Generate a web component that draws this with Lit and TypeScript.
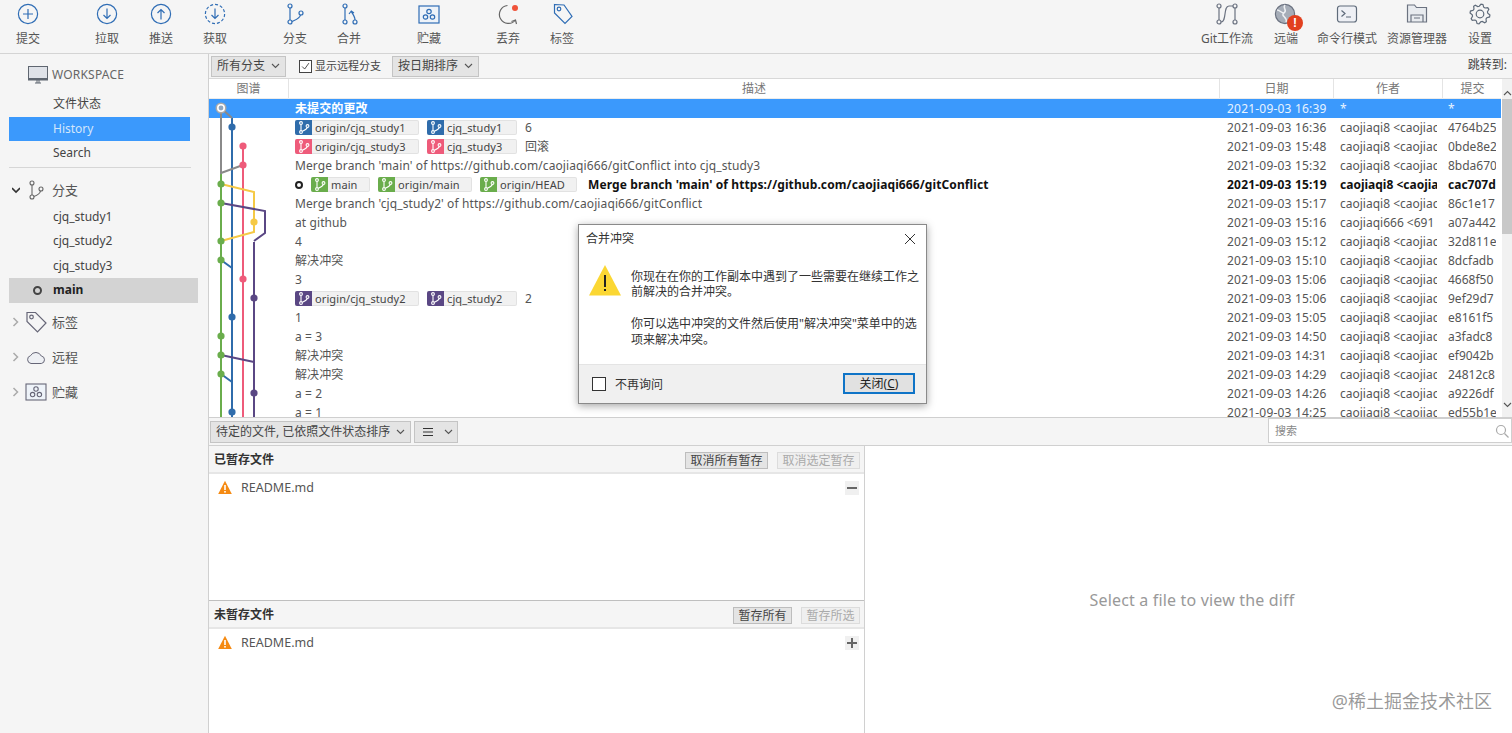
import { LitElement, html, css, svg } from 'lit';
import { customElement } from 'lit/decorators.js';

interface Ref { name: string; color: string; w: number; }
interface Commit {
    refs?: Ref[];
    text: string;
    date: string;
    author: string;
    hash: string;
    head?: boolean;
    selected?: boolean;
}

const BLUE = '#2f6cab';
const PINK = '#ee5b7a';
const GREEN = '#6aad4c';
const PURPLE = '#5a4784';
const YELLOW = '#f5c945';
const AUTHOR = 'caojiaqi8 <caojiaq';

const commits: Commit[] = [
    { text: '未提交的更改', date: '2021-09-03 16:39', author: '*', hash: '*', selected: true },
    { refs: [{ name: 'origin/cjq_study1', color: BLUE, w: 124 }, { name: 'cjq_study1', color: BLUE, w: 90 }], text: '6', date: '2021-09-03 16:36', author: AUTHOR, hash: '4764b25' },
    { refs: [{ name: 'origin/cjq_study3', color: PINK, w: 124 }, { name: 'cjq_study3', color: PINK, w: 90 }], text: '回滚', date: '2021-09-03 15:48', author: AUTHOR, hash: '0bde8e2' },
    { text: "Merge branch 'main' of https://github.com/caojiaqi666/gitConflict into cjq_study3", date: '2021-09-03 15:32', author: AUTHOR, hash: '8bda670' },
    { head: true, refs: [{ name: 'main', color: GREEN, w: 59 }, { name: 'origin/main', color: GREEN, w: 94 }, { name: 'origin/HEAD', color: GREEN, w: 97 }], text: "Merge branch 'main' of https://github.com/caojiaqi666/gitConflict", date: '2021-09-03 15:19', author: 'caojiaqi8 <caojia', hash: 'cac707d' },
    { text: "Merge branch 'cjq_study2' of https://github.com/caojiaqi666/gitConflict", date: '2021-09-03 15:17', author: AUTHOR, hash: '86c1e17' },
    { text: 'at github', date: '2021-09-03 15:16', author: 'caojiaqi666 <691', hash: 'a07a442' },
    { text: '4', date: '2021-09-03 15:12', author: AUTHOR, hash: '32d811e' },
    { text: '解决冲突', date: '2021-09-03 15:10', author: AUTHOR, hash: '8dcfadb' },
    { text: '3', date: '2021-09-03 15:06', author: AUTHOR, hash: '4668f50' },
    { refs: [{ name: 'origin/cjq_study2', color: PURPLE, w: 124 }, { name: 'cjq_study2', color: PURPLE, w: 90 }], text: '2', date: '2021-09-03 15:06', author: AUTHOR, hash: '9ef29d7' },
    { text: '1', date: '2021-09-03 15:05', author: AUTHOR, hash: 'e8161f5' },
    { text: 'a = 3', date: '2021-09-03 14:50', author: AUTHOR, hash: 'a3fadc8' },
    { text: '解决冲突', date: '2021-09-03 14:31', author: AUTHOR, hash: 'ef9042b' },
    { text: '解决冲突', date: '2021-09-03 14:29', author: AUTHOR, hash: '24812c8' },
    { text: 'a  = 2', date: '2021-09-03 14:26', author: AUTHOR, hash: 'a9226df' },
    { text: 'a = 1', date: '2021-09-03 14:25', author: AUTHOR, hash: 'ed55b1e' },
];

const branchGlyph = (color: string) => svg`
  <svg width="12" height="13" viewBox="0 0 12 13" fill="none" stroke=${color} stroke-width="1.1">
    <circle cx="3" cy="2" r="1.4"/><circle cx="3" cy="11" r="1.4"/><circle cx="9.5" cy="5" r="1.4"/>
    <path d="M3 3.4v6.2M9.3 6.4C9 8.5 6 9.5 4.2 10.3"/>
  </svg>`;

const gearPath = () => {
    const pts: string[] = [];
    for (let i = 0; i < 32; i++) {
        const a = (i / 32) * Math.PI * 2 + 0.1;
        const r = i % 4 < 2 ? 10 : 7.8;
        pts.push(`${(12 + r * Math.cos(a)).toFixed(2)} ${(12 + r * Math.sin(a)).toFixed(2)}`);
    }
    return 'M' + pts.join('L') + 'Z';
};

const stashIcon = (color: string, w = 22, h = 18) => svg`
  <svg width=${w} height=${h} viewBox="0 0 22 18" fill="none" stroke=${color} stroke-width="1.1">
    <rect x="1" y="1" width="20" height="16" fill="#eef3f9"/>
    <circle cx="11" cy="6" r="2.2"/><circle cx="7.6" cy="11.6" r="2.2"/><circle cx="14.4" cy="11.6" r="2.2"/>
  </svg>`;

const tagIcon = (color: string) => svg`
  <svg width="24" height="24" viewBox="0 0 24 24" fill="none" stroke=${color} stroke-width="1.2">
    <path d="M3 2.5h8.5L22 13l-8.5 9L3 11.5z"/><circle cx="7.5" cy="7" r="1.8"/>
  </svg>`;

const warnIcon = svg`
  <svg width="14" height="15" viewBox="0 0 14 15">
    <path d="M7 .8L13.8 14H.2z" fill="#f58a12"/>
    <rect x="6.2" y="5" width="1.6" height="5" fill="#fff"/><rect x="6.2" y="11" width="1.6" height="1.6" fill="#fff"/>
  </svg>`;

const chevron = svg`<svg width="9" height="6" viewBox="0 0 9 6" fill="none" stroke="#555" stroke-width="1.1"><path d="M1 1l3.5 3.5L8 1"/></svg>`;

const leftTools = [
    [['提交', svg`<circle cx="14" cy="14" r="9.6"/><path d="M14 9v10M9 14h10"/>`]],
    [
        ['拉取', svg`<circle cx="14" cy="14" r="9.6"/><path d="M14 8.5v10M10.5 15l3.5 3.5 3.5-3.5"/>`],
        ['推送', svg`<circle cx="14" cy="14" r="9.6"/><path d="M14 19.5v-10M10.5 13l3.5-3.5 3.5 3.5"/>`],
        ['获取', svg`<circle cx="14" cy="14" r="9.6" stroke-dasharray="3 2"/><path d="M14 8.5v10M10.5 15l3.5 3.5 3.5-3.5"/>`],
    ],
    [
        ['分支', svg`<circle cx="9" cy="6" r="2"/><circle cx="9" cy="22" r="2"/><circle cx="20" cy="13" r="2"/><path d="M9 8v12M19.500 15c-.5 3.500-5.500 5-8.600 6.500"/>`],
        ['合并', svg`<circle cx="10" cy="6" r="2"/><circle cx="10" cy="22" r="2"/><circle cx="20" cy="22" r="2"/><path d="M10 8v12M20 20c0-3-1.500-5-3.500-8M14 14l2.300-3 2.700 2"/>`],
    ],
    [['贮藏', svg`<rect x="4" y="6" width="20" height="17" fill="#eef3f9"/><circle cx="14" cy="11.5" r="2.2"/><circle cx="10.5" cy="17" r="2.2"/><circle cx="17.5" cy="17" r="2.2"/>`]],
    [
        ['丢弃', svg`<path d="M13.500 5.500A9 9 0 1 0 21.500 20" stroke="#666"/><path d="M17.500 21.500l4-1.500 1 4" stroke="#666"/><circle cx="21" cy="8" r="3" fill="#f0533a" stroke="none"/>`],
        ['标签', svg`<path d="M6.500 4.500l9.500.5 8 11.500-7 7-10.500-10.500z"/><circle cx="11" cy="9" r="1.800"/>`],
    ],
] as const;

const rightTools = [
    ['Git工作流', svg`<g stroke="#6b7280"><circle cx="6" cy="6" r="2"/><circle cx="6" cy="22" r="2"/><circle cx="22" cy="6" r="2"/><circle cx="22" cy="22" r="2"/><path d="M6 8v12M22 8v12M8 22c6 0 2-16 8-16h4"/></g>`],
    ['远端', svg`<circle cx="13" cy="14" r="9.6" fill="#a6adb8" stroke="#6b7280"/><path d="M13 5c-3 3 3 5-1 8s4 4 2 9M5 10c3 0 4 3 7 3" stroke="#eef0f3" stroke-width="1.5"/>`],
    ['命令行模式', svg`<rect x="4.500" y="6" width="19" height="16" rx="2.500" fill="#eef0f5" stroke="#5f6b7a"/><path d="M8.500 10.500l3.500 3-3.500 3M13 17h5" stroke="#5f6b7a"/>`],
    ['资源管理器', svg`<path d="M4.500 5h7l2 2.500h10V22h-19z" fill="#e8ebef" stroke="#6b7280"/><path d="M8 22v-7h12v7M11 18h6" stroke="#6b7280"/>`],
    ['设置', svg`<path d=${gearPath()} transform="translate(2 2)" stroke="#5f6b7a"/><circle cx="14" cy="14" r="3.800" stroke="#5f6b7a"/>`],
] as const;

const sideBranches = ['cjq_study1', 'cjq_study2', 'cjq_study3'];

@customElement('app-root')
export class AppRoot extends LitElement {
    static styles = css`
    :host { display: block; width: 1512px; height: 733px; position: relative; overflow: hidden; background: #fff; color: #555;
      font: 12px/16px 'Noto Sans', 'Noto Sans CJK SC', sans-serif; }
    * { box-sizing: border-box; }

    .toolbar { height: 54px; background: #f5f5f5; border-bottom: 1px solid #d4d4d4; display: flex; justify-content: space-between; }
    .tool-left { display: flex; gap: 25px; padding-left: 1px; }
    .tool-group { display: flex; }
    .tool-group:nth-child(3), .tool-group:nth-child(4) { margin-left: 1px; }
    .tool { width: 54px; display: flex; flex-direction: column; align-items: center; white-space: nowrap; }
    .tool svg { display: block; fill: none; stroke: #2f6db5; stroke-width: 1.2; }
    .tool span { margin-top: 3px; line-height: 16px; color: #555; }
    .tool-right { display: grid; grid-template-columns: 58px 60px 62px 78px 48px; margin-right: 8px; }
    .tool-right .tool { width: auto; position: relative; }
    .badge { position: absolute; left: 31px; top: 15px; width: 16px; height: 16px; border-radius: 50%; background: #e2401f; color: #fff !important;
      margin: 0 !important; font: bold 12px/16px 'Liberation Sans', sans-serif; text-align: center; }

    .body { display: flex; height: 679px; }
    .side { width: 209px; flex: none; background: #f5f5f5; border-right: 1px solid #d0d0d0; color: #444; }
    .ws { height: 38px; display: flex; align-items: center; padding: 3px 0 0 28px; gap: 4px; color: #666; letter-spacing: .2px; }
    .item { height: 24.5px; line-height: 24px; margin-left: 9px; width: 181px; padding-left: 44px; }
    .item.on { background: #3b99fc; color: #d3e6fb; }
    .sep { height: 1px; background: #d6d6d6; width: 182px; margin: 1px 0 0 9px; }
    .sec { display: flex; align-items: center; height: 35px; padding-left: 12px; gap: 4px; color: #555; font-size: 13px; }
    .sec .ic { width: 24px; display: flex; justify-content: center; }
    .sec svg.arrow { width: 8px; height: 10px; flex: none; }
    .sec.first { margin-top: 7px; height: 30px; }
    .item.main { width: 189px; margin-bottom: 2px; background: #d3d3d3; color: #222; font-weight: 700; position: relative; }
    .ring { position: absolute; left: 24px; top: 8px; width: 9px; height: 9px; border-radius: 50%; border: 2px solid #444; }

    .main-col { flex: 1; min-width: 0; display: flex; flex-direction: column; }
    .filter { height: 25px; background: #f5f5f5; border-bottom: 1px solid #d8d8d8; display: flex; align-items: center; padding-left: 2px; position: relative; }
    .combo { height: 21px; background: #e4e4e4; border: 1px solid #c4c4c4; display: inline-flex; align-items: center; gap: 6px; padding: 0 5px; color: #444; white-space: nowrap; }
    .check { display: inline-flex; align-items: center; gap: 3px; margin: 0 11px 0 13px; color: #444; font-size: 11px; }
    .box { width: 13px; height: 13px; border: 1px solid #444; background: #fff; display: inline-block; }
    .jump { position: absolute; right: 5px; top: 3px; color: #444; }

    .table { height: 339px; position: relative; overflow: hidden; background: #fff; border-bottom: 1px solid #cfcfcf; }
    .row, .head { display: grid; width: 1292px; }
    .row { grid-template-columns: 79px 931px 114px 108px 60px; }
    .head { grid-template-columns: 80px 931px 114px 109px 60px; }
    .head { height: 20px; line-height: 19px; text-align: center; color: #777; border-bottom: 1px solid #ececec; }
    .head div { border-right: 1px solid #e4e4e4; }
    .row { height: 19px; line-height: 19px; color: #555; white-space: nowrap; }
    .row.sel { background: #3b99fc; color: #e8f3ff; }
    .row.sel .text { color: #fff; font-weight: 700; }
    .row.bold { color: #111; font-weight: 700; }
    .row.bold .text { margin-left: 3px; }
    .cell { overflow: hidden; padding-left: 7px; }
    .date { padding-left: 8px; margin-right: 4px; letter-spacing: .2px; }
    .auth { padding-left: 7px; margin-right: 4px; }
    .hash { padding-left: 7px; margin-right: 5px; }
    .desc { display: flex; align-items: center; gap: 8px; padding-left: 7px; letter-spacing: .1px; }
    .hd-ring { width: 8px; height: 8px; border: 2px solid #222; border-radius: 50%; margin-left: 0; }
    .ref { height: 15px; display: flex; align-items: stretch; background: #f1f1f1; border: 1px solid #e2e2e2; border-left: 0; border-radius: 2px; font-size: 11px; line-height: 13px; color: #444; font-weight: 400; }
    .ref i { width: 17px; border-radius: 2px 0 0 2px; display: flex; align-items: center; justify-content: center; margin: -1px 3px -1px 0; }
    .graph { position: absolute; left: 0; top: 20px; pointer-events: none; }
    .scroll { position: absolute; right: 0; top: 0; bottom: 0; width: 10px; background: #f1f1f1; }
    .thumb { height: 135px; margin-top: 20px; background: #c8c8c8; }
    .s-up, .s-down { position: absolute; left: 1px; color: #666; }
    .s-up { top: 7px; transform: rotate(180deg); }
    .s-down { bottom: 5px; }

    .bar { height: 28px; background: #f5f5f5; border-bottom: 1px solid #d0d0d0; display: flex; align-items: center; padding-left: 1px; gap: 3px; position: relative; }
    .bar .combo { height: 22px; }
    .bar .combo.mode { padding: 0 4px 0 8px; gap: 11px; }
    .search { position: absolute; left: 1059px; top: 0; right: 0; height: 25px; background: #fff; border: 1px solid #cfcfcf; padding-left: 6px; line-height: 23px; color: #888; font-size: 11px; }
    .search svg { position: absolute; right: 1px; top: 4px; }

    .split { flex: 1; display: flex; min-height: 0; }
    .files { width: 656px; border-right: 1px solid #d0d0d0; display: flex; flex-direction: column; }
    .pane-h { height: 28px; background: #f5f5f5; border-bottom: 2px solid #e6e6e6; display: flex; align-items: center; gap: 9px; padding: 2px 4px 0 5px; color: #333; font-weight: 500; }
    .pane-h b { font-weight: 700; flex: 1; color: #333; }
    .btn { height: 17px; padding: 0 4.5px; line-height: 15px; background: #e4e4e4; border: 1px solid #bdbdbd; color: #444; font-weight: 400; white-space: nowrap; }
    .btn.off { background: #efefef; border-color: #dcdcdc; color: #aaa; }
    .list { background: #fff; }
    .list.a { height: 127px; border-bottom: 1px solid #bfbfbf; }
    .list.b { flex: 1; }
    .file { height: 27px; display: flex; align-items: center; padding: 0 5px 0 9px; gap: 9px; color: #555; font-size: 12.5px; }
    .file span { flex: 1; }
    .pm { width: 14px; height: 14px; background: #f0f0f0; position: relative; }
    .pm::before { content: ''; position: absolute; left: 2px; right: 2px; top: 6px; height: 2px; background: #666; }
    .pm.plus::after { content: ''; position: absolute; top: 2px; bottom: 2px; left: 6px; width: 2px; background: #666; }
    .diff { flex: 1; background: #fff; display: flex; align-items: center; justify-content: center; color: #999; font-size: 16px; letter-spacing: .17px; padding: 21px 0 0 7px; }

    .dialog { position: absolute; left: 578px; top: 224px; width: 349px; height: 180px; background: #fff; border: 1px solid #8a8a8a; box-shadow: 0 2px 8px rgba(0,0,0,.35); display: flex; flex-direction: column; color: #333; }
    .d-title { height: 29px; display: flex; align-items: center; justify-content: space-between; padding: 1px 10px 0 7px; }
    .d-body { flex: 1; display: flex; padding: 11px 10px 0 10px; gap: 10px; }
    .d-text { line-height: 15.8px; padding-top: 5px; width: 292px; flex: none; }
    .d-text p { margin: 0 0 16px; }
    .d-foot { height: 41px; background: #f0f0f0; border-top: 1px solid #e4e4e4; display: flex; align-items: center; padding: 0 11px 0 13px; gap: 9px; }
    .d-foot .box { width: 14px; height: 14px; border-color: #333; margin-top: 1px; }
    .d-foot span.t { flex: 1; padding-top: 3px; }
    .d-btn { width: 72px; height: 21px; background: #e1e1e1; border: 2px solid #0f74c7; text-align: center; line-height: 17px; color: #222; }
    .d-btn u { text-decoration: underline; }

    .wm { position: absolute; right: 20px; top: 689px; font-size: 18px; line-height: 24px; color: rgba(120,120,120,.75); }
  `;

    private graph() {
        const line = (d: string, c: string, w = 2) => svg`<path d=${d} stroke=${c} stroke-width=${w} fill="none"/>`;
        const dot = (x: number, y: number, c: string) => svg`<circle cx=${x} cy=${y} r="3.600" fill=${c}/>`;
        // x is page x - 209, y is page y - 99
        const y = (v: number) => v - 99;
        const lanes = { g: 12, b: 23, p: 34, y: 45, r: 56 };
        return svg`<svg class="graph" width="79" height="320" viewBox="0 0 79 320">
      ${line(`M${lanes.g} ${y(173)}V320`, GREEN)}
      ${line(`M${lanes.b} ${y(118)}V320`, BLUE)}
      ${line(`M${lanes.p} ${y(146)}V320`, PINK)}
      ${line(`M${lanes.g} ${y(184)}L${lanes.y} ${y(192)}V${y(232)}L${lanes.g} ${y(241)}`, YELLOW)}
      ${line(`M${lanes.y} ${y(242)}V320`, PURPLE)}
      ${line(`M${lanes.g} ${y(203)}L${lanes.r} ${y(211)}V${y(233)}L${lanes.y} ${y(241)}`, PURPLE)}
      ${line(`M${lanes.g} ${y(355)}L${lanes.y} ${y(362)}`, PURPLE)}
      ${line(`M${lanes.g} ${y(260)}L${lanes.b} ${y(268)}`, BLUE)}
      ${line(`M${lanes.g} ${y(374)}L${lanes.b} ${y(382)}`, BLUE)}
      ${line(`M${lanes.g} ${y(108)}V${y(173)}L${lanes.p} ${y(165)}`, '#8a8a8a')}
      ${line(`M${lanes.g} ${y(108)}L${lanes.b} ${y(118)}`, '#8a8a8a')}
      <circle cx=${lanes.g} cy=${y(108)} r="5.500" fill="#a9a9a9"/>
      <circle cx=${lanes.g} cy=${y(108)} r="4" fill="#fff"/>
      <circle cx=${lanes.g} cy=${y(108)} r="2.400" fill="#8fa6bf"/>
      ${dot(lanes.b, y(127), BLUE)} ${dot(lanes.p, y(146), PINK)} ${dot(lanes.p, y(165), PINK)}
      ${dot(lanes.g, y(184), GREEN)} ${dot(lanes.g, y(203), GREEN)} ${dot(lanes.y, y(222), YELLOW)}
      ${dot(lanes.g, y(241), GREEN)} ${dot(lanes.g, y(260), GREEN)} ${dot(lanes.p, y(279), PINK)}
      ${dot(lanes.y, y(298), PURPLE)} ${dot(lanes.b, y(317), BLUE)} ${dot(lanes.g, y(336), GREEN)}
      ${dot(lanes.g, y(355), GREEN)} ${dot(lanes.g, y(374), GREEN)} ${dot(lanes.y, y(393), PURPLE)}
      ${dot(lanes.b, y(412), BLUE)}
    </svg>`;
    }

    private renderRow(c: Commit) {
        return html`<div class="row ${c.selected ? 'sel' : ''} ${c.head ? 'bold' : ''}">
      <div></div>
      <div class="desc">
        ${c.head ? html`<span class="hd-ring"></span>` : ''}
        ${(c.refs || []).map(r => html`<span class="ref" style="width:${r.w}px"><i style="background:${r.color}">${branchGlyph('#fff')}</i>${r.name}</span>`)}
        <span class="text">${c.text}</span>
      </div>
      <div class="cell date">${c.date}</div>
      <div class="cell auth">${c.author}</div>
      <div class="cell hash">${c.hash}</div>
    </div>`;
    }

    render() {
        const arrow = svg`<svg class="arrow" viewBox="0 0 8 10" fill="none" stroke="#aaa" stroke-width="1.500"><path d="M1.500 1l4 4-4 4"/></svg>`;
        return html`
    <div class="toolbar">
      <div class="tool-left">
        ${leftTools.map(g => html`<div class="tool-group">${g.map(t => html`<div class="tool"><svg width="28" height="28" viewBox="0 0 28 28">${t[1]}</svg><span>${t[0]}</span></div>`)}</div>`)}
      </div>
      <div class="tool-right">
        ${rightTools.map(t => html`<div class="tool"><svg width="28" height="28" viewBox="0 0 28 28">${t[1]}</svg>
          ${t[0] === '远端' ? html`<span class="badge">!</span>` : ''}<span>${t[0]}</span></div>`)}
      </div>
    </div>
    <div class="body">
      <div class="side">
        <div class="ws">
          <svg width="20" height="18" viewBox="0 0 20 18"><rect x=".5" y=".5" width="19" height="13.500" fill="#dfe2e8" stroke="#5f6670"/><rect x=".5" y="12" width="19" height="2" fill="#5f6670"/><path d="M7 17h6M9 14v3M11 14v3" stroke="#5f6670"/></svg>
          <span>WORKSPACE</span>
        </div>
        <div class="item">文件状态</div>
        <div class="item on">History</div>
        <div class="item">Search</div>
        <div class="sep"></div>
        <div class="sec first">
          <svg class="arrow" viewBox="0 0 8 10" fill="none" stroke="#333" stroke-width="1.600"><path d="M0 3l4 4 4-4"/></svg>
          <span class="ic"><svg width="18" height="20" viewBox="0 0 18 20" fill="none" stroke="#666" stroke-width="1.100"><circle cx="5" cy="3" r="2"/><circle cx="5" cy="17" r="2"/><circle cx="14" cy="9" r="2"/><path d="M5 5v10M13.500 11c-.5 3-4 4.500-6.700 5.500"/></svg></span>分支
        </div>
        ${sideBranches.map(b => html`<div class="item">${b}</div>`)}
        <div class="item main"><span class="ring"></span>main</div>
        <div class="sec">${arrow}<span class="ic">${tagIcon('#667')}</span>标签</div>
        <div class="sec">${arrow}<span class="ic"><svg width="20" height="13" viewBox="0 0 20 13" fill="#eef0f4" stroke="#667"><path d="M5 12.500a4 4 0 0 1-.5-7.800A6 6 0 0 1 15.300 5a3.800 3.800 0 0 1 0 7.500z"/></svg></span>远程</div>
        <div class="sec">${arrow}<span class="ic">${stashIcon('#667')}</span>贮藏</div>
      </div>
      <div class="main-col">
        <div class="filter">
          <span class="combo">所有分支 ${chevron}</span>
          <span class="check"><svg class="box" viewBox="0 0 13 13" fill="none" stroke="#333"><path d="M2.500 6.500l3 3 5-7"/></svg>显示远程分支</span>
          <span class="combo">按日期排序 ${chevron}</span>
          <span class="jump">跳转到:</span>
        </div>
        <div class="table">
          <div class="head"><div>图谱</div><div>描述</div><div>日期</div><div>作者</div><div>提交</div></div>
          ${commits.map(c => this.renderRow(c))}
          ${this.graph()}
          <div class="scroll">
            <div class="thumb"></div>
            <span class="s-up">${chevron}</span>
            <span class="s-down">${chevron}</span>
          </div>
        </div>
        <div class="bar">
          <span class="combo">待定的文件, 已依照文件状态排序 ${chevron}</span>
          <span class="combo mode"><svg width="10" height="10" viewBox="0 0 10 10" stroke="#333"><path d="M0 1.500h10M0 5h10M0 8.500h10"/></svg>${chevron}</span>
          <div class="search">搜索<svg width="16" height="16" viewBox="0 0 16 16" fill="none" stroke="#aaa" stroke-width="1.200"><circle cx="7" cy="7" r="4.500"/><path d="M10.500 10.500l4 4"/></svg></div>
        </div>
        <div class="split">
          <div class="files">
            <div class="pane-h"><b>已暂存文件</b><span class="btn">取消所有暂存</span><span class="btn off">取消选定暂存</span></div>
            <div class="list a"><div class="file">${warnIcon}<span>README.md</span><i class="pm"></i></div></div>
            <div class="pane-h"><b>未暂存文件</b><span class="btn">暂存所有</span><span class="btn off">暂存所选</span></div>
            <div class="list b"><div class="file">${warnIcon}<span>README.md</span><i class="pm plus"></i></div></div>
          </div>
          <div class="diff">Select a file to view the diff</div>
        </div>
      </div>
    </div>
    <div class="dialog">
      <div class="d-title"><span>合并冲突</span>
        <svg width="12" height="12" viewBox="0 0 12 12" stroke="#333" fill="none"><path d="M1 1l10 10M11 1L1 11"/></svg></div>
      <div class="d-body">
        <svg width="32" height="32" viewBox="0 0 32 32" style="flex:none"><path d="M16 1L32 31.500H0z" fill="#fbd733"/><rect x="15" y="11" width="2" height="12" fill="#222"/><rect x="15" y="25" width="2" height="2" fill="#222"/></svg>
        <div class="d-text">
          <p>你现在在你的工作副本中遇到了一些需要在继续工作之前解决的合并冲突。</p>
          <p>你可以选中冲突的文件然后使用"解决冲突"菜单中的选项来解决冲突。</p>
        </div>
      </div>
      <div class="d-foot"><span class="box"></span><span class="t">不再询问</span><span class="d-btn">关闭(<u>C</u>)</span></div>
    </div>
    <div class="wm">@稀土掘金技术社区</div>
    `;
    }
}
